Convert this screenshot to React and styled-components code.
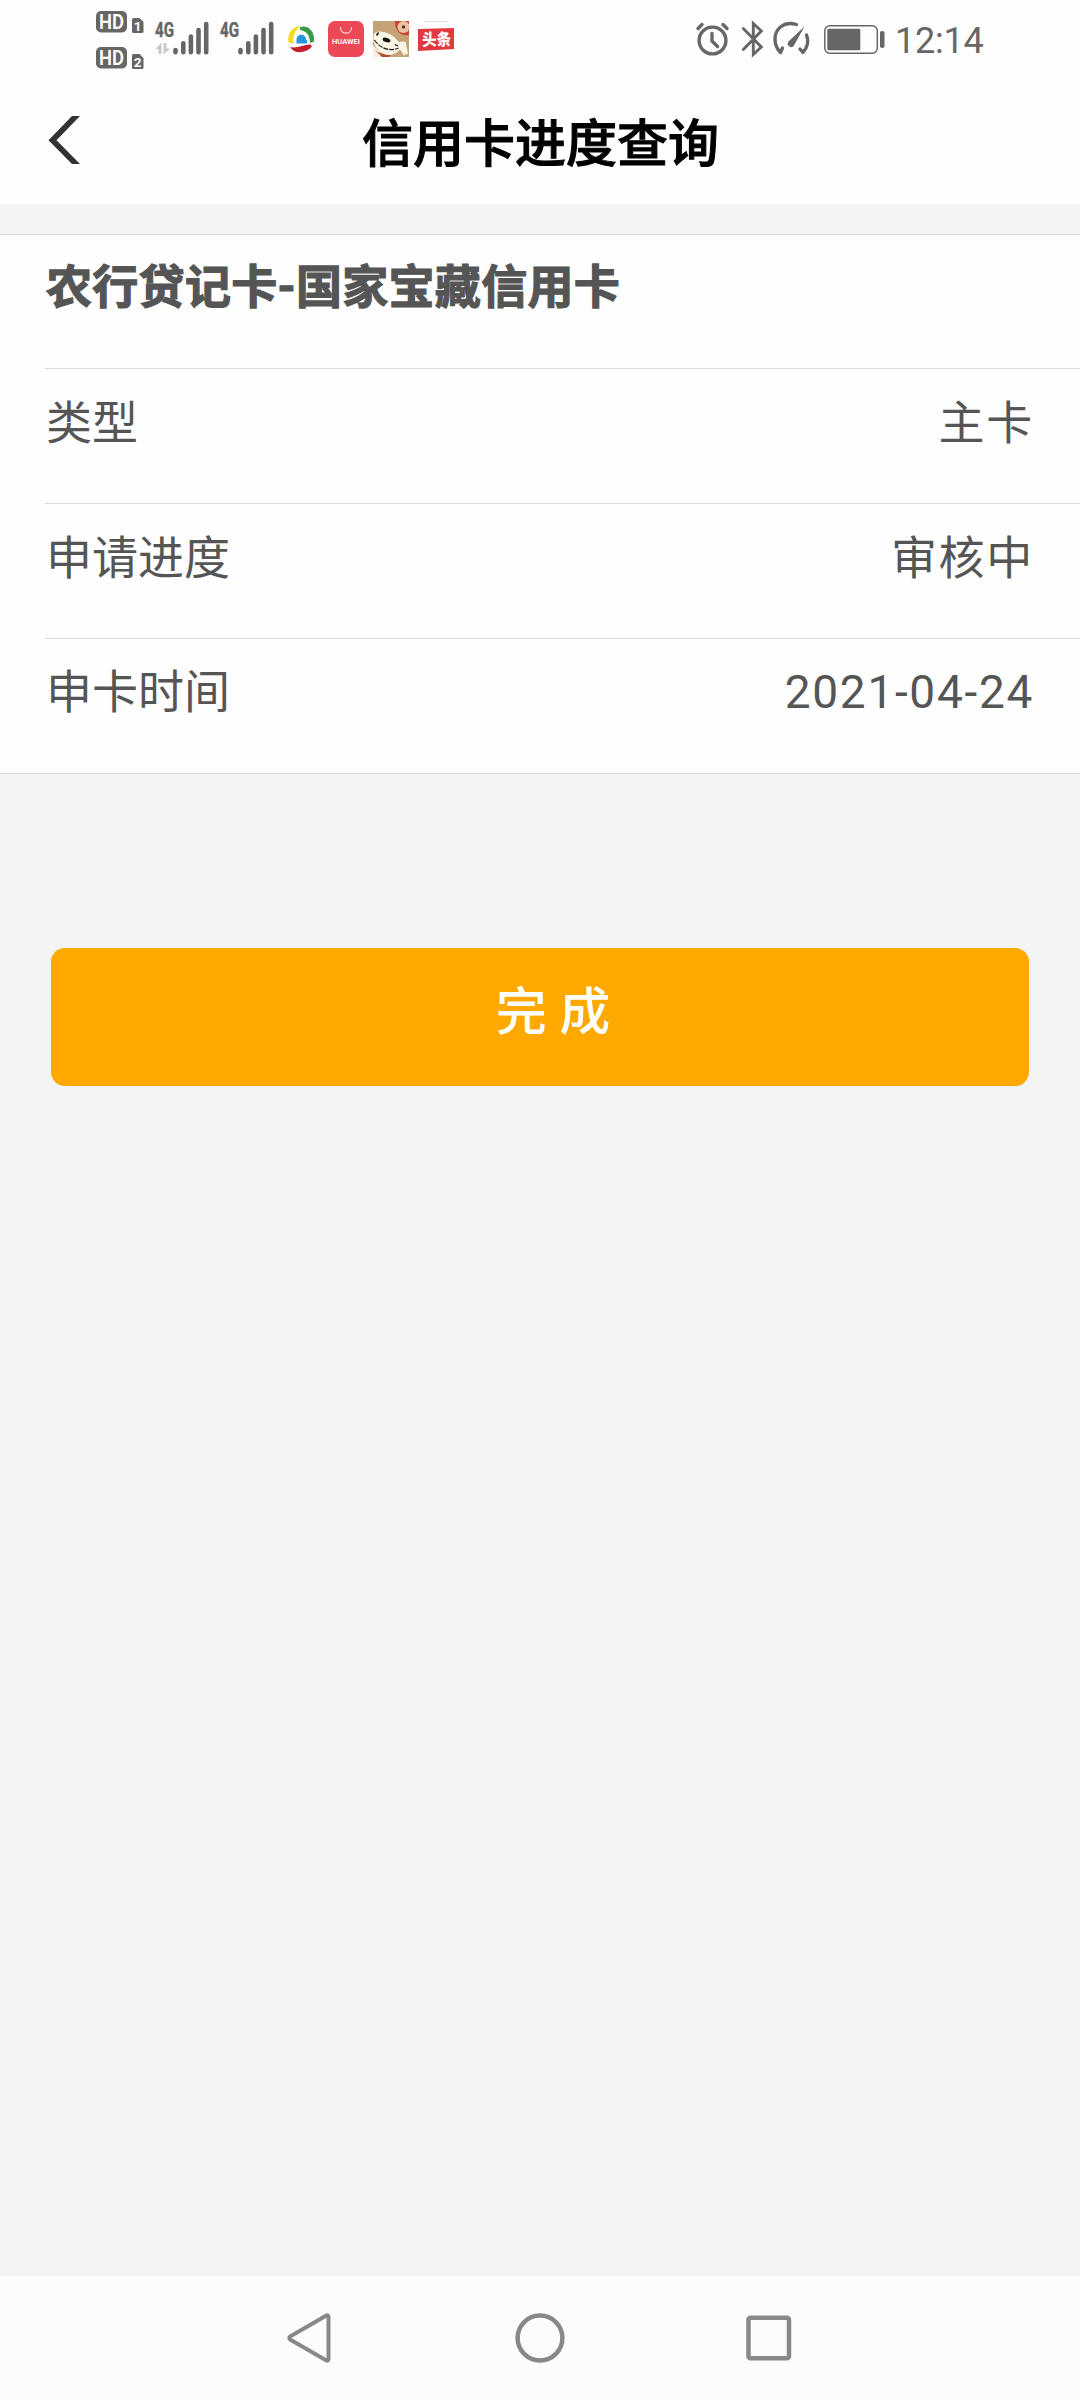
import React from 'react';
import styled, { createGlobalStyle, ThemeProvider } from 'styled-components';

const theme = {
  colors: {
    page: '#f4f4f4',
    surface: '#fefefe',
    border: '#dadada',
    text: '#555555',
    title: '#000000',
    status: '#666666',
    button: '#ffa900',
    nav: '#888888',
  },
  font: "Roboto, 'Noto Sans CJK SC', sans-serif",
};

const data = {
  title: '信用卡进度查询',
  card: '农行贷记卡-国家宝藏信用卡',
  rows: [
    { label: '类型', value: '主卡' },
    { label: '申请进度', value: '审核中' },
    { label: '申卡时间', value: '2021-04-24' },
  ],
  button: '完 成',
  time: '12:14',
};

const GlobalStyle = createGlobalStyle`
  * {
    box-sizing: border-box;
  }

  body {
    margin: 0;
    font-family: ${theme.font};
  }
`;

const Screen = styled.div`
  display: flex;
  flex-direction: column;
  width: 1080px;
  height: 2400px;
  background-color: ${({ theme }) => theme.colors.page};
`;

const StatusBar = styled.div`
  display: flex;
  justify-content: space-between;
  align-items: center;
  height: 78px;
  padding: 0 96px;
  background-color: ${({ theme }) => theme.colors.surface};
  color: ${({ theme }) => theme.colors.status};
`;

const StatusGroup = styled.div`
  display: flex;
  align-items: center;
  gap: ${({ $gap }) => $gap || 0}px;
`;

const HdStack = styled.div`
  display: flex;
  flex-direction: column;
  gap: 14px;
  margin-right: 2px;
  padding-top: 2px;
`;

const AppIcons = styled(StatusGroup)`
  margin-left: 3px;
`;

const Icon = styled.svg`
  display: block;
  flex: none;
  overflow: visible;
  margin-right: ${({ $after }) => $after || 0}px;
`;

const Clock = styled.span`
  width: 89px;
  margin-left: 10px;
  padding-top: 3px;
  font-size: 36px;
  line-height: 40px;
  letter-spacing: -0.2px;
  white-space: nowrap;
`;

const Header = styled.header`
  display: grid;
  grid-template-columns: 120px 1fr 120px;
  align-items: center;
  height: 126px;
  background-color: ${({ theme }) => theme.colors.surface};
`;

const BackButton = styled.button`
  display: flex;
  height: 126px;
  padding: 38px 0 0 48px;
  border: 0;
  background: none;
`;

const Title = styled.h1`
  margin: 0;
  padding: 8px 0 0 1px;
  color: ${({ theme }) => theme.colors.title};
  font-size: 51px;
  font-weight: 500;
  line-height: 60px;
  text-align: center;
  -webkit-text-stroke: 1px currentColor;
`;

const Card = styled.section`
  margin-top: 30px;
  padding-left: 45px;
  border-top: 1px solid ${({ theme }) => theme.colors.border};
  border-bottom: 1px solid ${({ theme }) => theme.colors.border};
  background-color: ${({ theme }) => theme.colors.surface};
`;

const Row = styled.div`
  display: flex;
  justify-content: space-between;
  height: 135px;
  padding: 24px 46px 0 1px;
  border-bottom: 1px solid ${({ theme }) => theme.colors.border};
  color: ${({ theme }) => theme.colors.text};
  font-size: 46px;
  line-height: 60px;

  &:first-child {
    height: 134px;
    padding-top: 22px;
  }

  &:last-child {
    height: 134px;
    padding-top: 23px;
    border-bottom: 0;
  }
`;

const CardName = styled.strong`
  font-weight: 700;
  letter-spacing: 0.3px;
  -webkit-text-stroke: 1.2px currentColor;
`;

const Value = styled.span`
  letter-spacing: 1.7px;
`;

const SubmitButton = styled.button`
  height: 138px;
  margin: 174px 51px 0;
  padding: 0 0 8px 26px;
  border: 0;
  border-radius: 14px;
  background-color: ${({ theme }) => theme.colors.button};
  color: #ffffff;
  font-family: inherit;
  font-size: 51px;
  font-weight: 500;
  line-height: 60px;
`;

const NavBar = styled.nav`
  display: flex;
  justify-content: center;
  gap: 179px;
  height: 124px;
  margin-top: auto;
  padding-top: 37px;
  background-color: #fcfcfc;
  color: ${({ theme }) => theme.colors.nav};
`;

const HdIcon = ({ sim }) => (
  <Icon width="47" height="22" viewBox="0 0 47 22" fill="currentColor">
    <rect width="31" height="21.5" rx="5" />
    <text x="3" y="17.6" fill="#fff" fontSize="19.5" fontWeight="600" textLength="25" lengthAdjust="spacingAndGlyphs">
      HD
    </text>
    <path d="M37.5 7h6l4 4v9.5a1.5 1.5 0 0 1-1.5 1.5h-8.5a1.5 1.5 0 0 1-1.5-1.5v-12a1.5 1.5 0 0 1 1.5-1.5z" />
    <text x="41.6" y="19.5" fill="#fff" fontSize="13.5" fontWeight="700" textAnchor="middle">
      {sim}
    </text>
  </Icon>
);

const SignalIcon = ({ arrows }) => (
  <Icon width="55" height="36" viewBox="0 0 55 36" fill="currentColor">
    <text
      x="0"
      y="15.5"
      fontSize="20"
      fontWeight="700"
      stroke="currentColor"
      strokeWidth="0.4"
      textLength="19"
      lengthAdjust="spacingAndGlyphs"
    >
      4G
    </text>
    {arrows && (
      <g fill="#c9c9c9">
        <path d="M0.5 28l6-6.5v11.500h-3v-5z" />
        <path d="M8.5 22h3v5.500h3.500l-6.500 6z" />
      </g>
    )}
    <g stroke="currentColor" strokeWidth="4.6" strokeLinecap="round">
      <path d="M20.5 29v2.2M28.3 22.2v9M35.9 15.5v15.7M43.5 9v22.2M51.2 3v28.2" />
    </g>
  </Icon>
);

const SwirlIcon = () => (
  <Icon $after={5} width="26" height="26" viewBox="0 0 26 26">
    <path d="M12.5 0.5C4 0 -1 8 0.5 16.5l5 1C4.5 10 7 4.5 12.5 0.5z" fill="#f5dc1f" />
    <path d="M12 1c8-2.5 15 4 14 14.5l-4 1.5C22 9.5 18.5 5 12 4z" fill="#3a9b45" />
    <path d="M2 21c7 2 14.5-3 20.5-2.5l1.5 2c-6 7-17.5 8-22 0.5z" fill="#c21e2c" />
    <path d="M8.5 17.5v-3.500c0-7 9.500-7 9.500-0.500 1.500 1 1.500 2.500 1 4z" fill="#2796df" />
  </Icon>
);

const HuaweiIcon = () => (
  <Icon width="36" height="36" viewBox="0 0 36 36">
    <rect width="36" height="36" rx="7" fill="#ec4855" />
    <path d="M12.5 6.5c0 7.5 11 7.5 11 0" fill="none" stroke="#ffd9dc" strokeWidth="1.2" strokeLinecap="round" />
    <text x="4" y="23" fill="#fff" fontSize="6.5" fontWeight="600" textLength="28" lengthAdjust="spacingAndGlyphs">
      HUAWEI
    </text>
  </Icon>
);

const DogIcon = () => (
  <Icon width="36" height="36" viewBox="0 0 36 36">
    <rect width="36" height="36" fill="#c6a377" />
    <path d="M0 24l12 12H0z" fill="#f7eee2" />
    <path d="M1 28c5 5 12 6 17 6l-2 2H9z" fill="#ad4c2c" />
    <path d="M36 0H22c-1 9 6 16 14 14z" fill="#c94935" />
    <circle cx="30.5" cy="6" r="6" fill="#eac4a2" />
    <circle cx="30.5" cy="6" r="1.8" fill="#603427" />
    <path d="M0.5 15c1-9 20-3 25 6l7-0.500 2.500 12-4 2-4-6c-5 6-13 7-19 3S0 21 0.500 15z" fill="#fbf5e8" />
    <path d="M1.5 19c5 8 15 12 24 8" fill="none" stroke="#252321" strokeWidth="1.2" strokeDasharray="5 1" />
    <ellipse cx="13.5" cy="19" rx="4" ry="2.2" fill="#171512" transform="rotate(18 13.5 19)" />
    <ellipse cx="4.500" cy="13" rx="1" ry="2" fill="#171512" transform="rotate(30 4.500 13)" />
    <path d="M22 23.500l3 1.500" stroke="#171512" strokeWidth="1.2" />
  </Icon>
);

const NewsIcon = () => (
  <Icon width="36" height="36" viewBox="0 0 36 36">
    <path d="M6 0.5h24" stroke="#f3c9cb" strokeWidth="0.8" />
    <path d="M0 8l36-1v21l-36 2z" fill="#e2393f" />
    <text
      x="4"
      y="24.4"
      fill="#fff"
      fontSize="16.5"
      fontWeight="900"
      textLength="29"
      lengthAdjust="spacingAndGlyphs"
      transform="rotate(-1.5 18 18)"
    >
      头条
    </text>
  </Icon>
);

const AlarmIcon = () => (
  <Icon $after={4} width="33" height="34" viewBox="0 0 33 34" fill="none" stroke="currentColor" strokeWidth="3.4" strokeLinecap="round">
    <circle cx="16.5" cy="18.5" r="13.4" />
    <path d="M16 11.5v7.5l5.5 5.5" strokeLinejoin="round" />
    <path d="M2 6.5l4-4M31 6.5l-4-4" />
  </Icon>
);

const BluetoothIcon = () => (
  <Icon $after={1} width="21" height="34" viewBox="0 0 21 34" fill="none" stroke="currentColor" strokeWidth="2.9" strokeLinecap="round">
    <path d="M1.3 6.5l18 18.5-8 7.5v-31l8 7.5-18 18.5" />
  </Icon>
);

const GaugeIcon = () => (
  <Icon $after={5} width="37" height="34" viewBox="0 0 37 34" fill="none" stroke="currentColor" strokeWidth="3.4" strokeLinecap="round" strokeLinejoin="round">
    <path d="M23.5 2.5C11-1.5 2 7 2 17c0 5 1.5 9.5 5.5 13.5l2-4.5" />
    <path d="M33.5 13c2.5 6 1 12-3.5 17.5l-3-3.5" />
    <path d="M31.5 4.5L21.5 22.5a3.5 3.5 0 1 1-5-4z" fill="currentColor" stroke="none" />
  </Icon>
);

const BatteryIcon = () => (
  <Icon width="61" height="29" viewBox="0 0 61 29">
    <rect x="0.8" y="0.8" width="52.5" height="27.4" rx="5" fill="none" stroke="currentColor" strokeWidth="1.5" />
    <rect x="3.3" y="3.7" width="33" height="21.6" rx="1.5" fill="currentColor" />
    <rect x="56" y="6" width="4.5" height="17" rx="2" fill="currentColor" />
  </Icon>
);

const InfoRow = ({ label, value }) => (
  <Row>
    <span>{label}</span>
    <Value>{value}</Value>
  </Row>
);

const App = () => {
  return (
    <ThemeProvider theme={theme}>
      <GlobalStyle />
      <Screen>
        <StatusBar>
          <StatusGroup $gap={10}>
            <HdStack>
              <HdIcon sim="1" />
              <HdIcon sim="2" />
            </HdStack>
            <SignalIcon arrows />
            <SignalIcon />
            <AppIcons $gap={9}>
              <SwirlIcon />
              <HuaweiIcon />
              <DogIcon />
              <NewsIcon />
            </AppIcons>
          </StatusGroup>
          <StatusGroup>
            <StatusGroup $gap={9}>
              <AlarmIcon />
              <BluetoothIcon />
              <GaugeIcon />
              <BatteryIcon />
            </StatusGroup>
            <Clock>{data.time}</Clock>
          </StatusGroup>
        </StatusBar>
        <Header>
          <BackButton aria-label="返回">
            <Icon width="32" height="48" viewBox="0 0 32 48" fill="#333333">
              <path d="M24 0h8l-23.5 24.2L32 48h-8L0.5 24.2z" />
            </Icon>
          </BackButton>
          <Title>{data.title}</Title>
        </Header>
        <Card>
          <Row>
            <CardName>{data.card}</CardName>
          </Row>
          {data.rows.map((row) => (
            <InfoRow key={row.label} label={row.label} value={row.value} />
          ))}
        </Card>
        <SubmitButton>{data.button}</SubmitButton>
        <NavBar>
          <Icon width="50" height="50" viewBox="0 0 50 50" fill="none" stroke="currentColor" strokeWidth="4" strokeLinejoin="round">
            <path d="M40 2.8Q42.500 1.500 42.500 4v42q0 2.500-2.500 1.200L4.500 26.800q-2.500-1.800 0-3.600z" />
          </Icon>
          <Icon width="50" height="50" viewBox="0 0 50 50" fill="none" stroke="currentColor" strokeWidth="4.5">
            <circle cx="25" cy="25" r="22.4" />
          </Icon>
          <Icon width="50" height="50" viewBox="0 0 50 50" fill="none" stroke="currentColor" strokeWidth="4.5">
            <rect x="4.5" y="4.8" width="40.5" height="40.5" rx="2" />
          </Icon>
        </NavBar>
      </Screen>
    </ThemeProvider>
  );
};

export default App;
